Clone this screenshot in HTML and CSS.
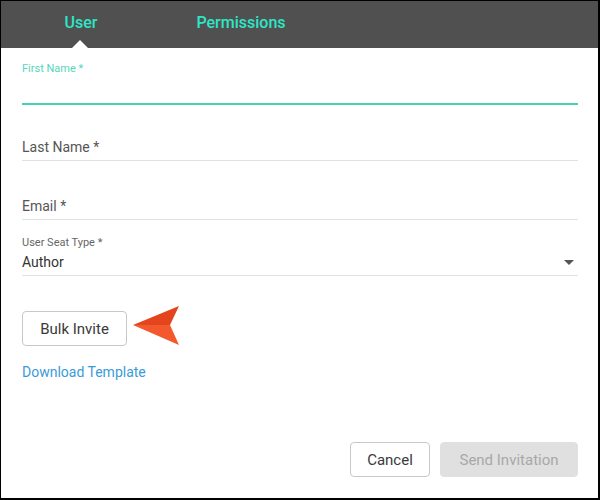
FILE: index.html
```html
<!DOCTYPE html>
<html>
<head>
<meta charset="utf-8">
<link rel="stylesheet" href="styles.css">
</head>
<body>
<div class="dialog">
  <div class="tabs">
    <div class="tab active">User</div>
    <div class="tab">Permissions</div>
  </div>
  <div class="form">
    <div class="field field-first">
      <div class="small-label teal">First Name *</div>
      <div class="input-area"></div>
    </div>
    <div class="field field-last">
      <div class="placeholder">Last Name *</div>
    </div>
    <div class="field field-email">
      <div class="placeholder">Email *</div>
    </div>
    <div class="field field-seat">
      <div class="small-label">User Seat Type *</div>
      <div class="select-row">
        <span class="value">Author</span>
        <span class="caret"></span>
      </div>
    </div>
    <div class="bulk-row">
      <button class="btn">Bulk Invite</button>
      <svg class="pointer" width="48" height="42" viewBox="0 0 48 42">
        <polygon points="1,20 47,1 38,20" fill="#e3461f"/>
        <polygon points="1,20 38,20 47,40" fill="#f3592c"/>
      </svg>
    </div>
    <a class="link">Download Template</a>
    <div class="footer">
      <button class="btn btn-cancel">Cancel</button>
      <button class="btn btn-send">Send Invitation</button>
    </div>
  </div>
</div>
</body>
</html>
```

FILE: styles.css
```css
html, body {
  margin: 0;
  padding: 0;
  background: #fff;
}

.dialog {
  width: 600px;
  height: 500px;
  box-sizing: border-box;
  border-style: solid;
  border-color: #000;
  border-width: 1px 2px 2px 1px;
  display: flex;
  flex-direction: column;
  font-family: Roboto, "Liberation Sans", sans-serif;
  background: #fff;
}

.tabs {
  height: 47px;
  background: #505050;
  display: flex;
  flex-shrink: 0;
}

.tab {
  width: 160px;
  box-sizing: border-box;
  padding-top: 12px;
  text-align: center;
  font-size: 16px;
  line-height: 20px;
  font-weight: 500;
  color: #2ee6c6;
  position: relative;
}

.tab.active::after {
  content: "";
  position: absolute;
  left: 71px;
  bottom: 0;
  width: 0;
  height: 0;
  border-left: 8px solid transparent;
  border-right: 8px solid transparent;
  border-bottom: 8px solid #fff;
}

.form {
  flex: 1;
  display: flex;
  flex-direction: column;
  padding: 0 20px 21px 21px;
}

.field {
  border-bottom: 1px solid #e2e2e2;
}

.field-first {
  padding-top: 14px;
  border-bottom: 2px solid #47d0b4;
}

.small-label {
  font-size: 11px;
  line-height: 13px;
  color: #666;
}

.small-label.teal {
  color: #55d6bc;
}

.input-area {
  height: 28px;
}

.placeholder {
  font-size: 14px;
  line-height: 20px;
  color: #555;
  padding-bottom: 3px;
}

.field-last {
  padding-top: 32px;
}

.field-email {
  padding-top: 35px;
}

.field-seat {
  padding-top: 16px;
}

.select-row {
  display: flex;
  align-items: center;
  justify-content: space-between;
  margin-top: 3px;
  padding-bottom: 3px;
}

.value {
  font-size: 14px;
  line-height: 20px;
  color: #333;
}

.caret {
  width: 0;
  height: 0;
  border-left: 5px solid transparent;
  border-right: 5px solid transparent;
  border-top: 5px solid #555;
  margin-right: 4px;
}

.bulk-row {
  display: flex;
  align-items: flex-start;
  margin-top: 35px;
}

.btn {
  font-family: Roboto, "Liberation Sans", sans-serif;
  font-size: 15px;
  font-weight: 400;
  height: 35px;
  box-sizing: border-box;
  padding: 0 15px;
  background: #fff;
  border: 1px solid #c8c8c8;
  border-radius: 4px;
  color: #3a3a3a;
}

.bulk-row .btn {
  width: 105px;
  padding: 0;
}

.pointer {
  margin-left: 5px;
  margin-top: -6px;
}

.link {
  margin-top: 15px;
  font-size: 14px;
  line-height: 20px;
  color: #3a9bd9;
  align-self: flex-start;
}

.footer {
  margin-top: auto;
  display: flex;
  justify-content: flex-end;
  gap: 10px;
}

.btn-cancel {
  width: 80px;
  padding: 0;
}

.btn-send {
  width: 138px;
  padding: 0;
  background: #e0e0e0;
  border-color: #e0e0e0;
  color: #a8a8a8;
}
```
